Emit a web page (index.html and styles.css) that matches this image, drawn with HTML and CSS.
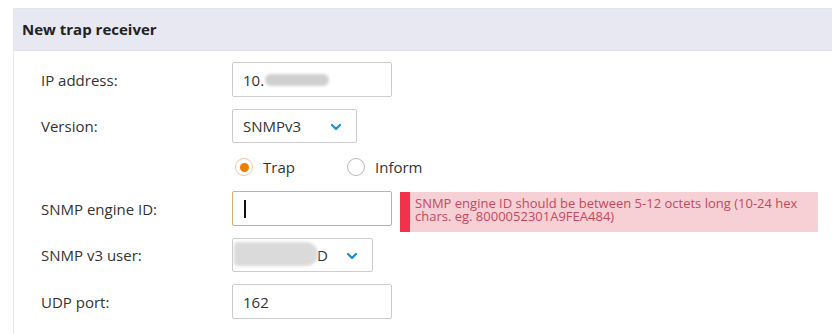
FILE: index.html
```html
<!DOCTYPE html>
<html>
<head>
<meta charset="utf-8">
<link rel="stylesheet" href="styles.css">
</head>
<body>
<div class="panel">
  <div class="header">New trap receiver</div>
  <div class="body">
    <div class="row">
      <div class="label">IP address:</div>
      <div class="field input wide"><span class="val">10.</span><span class="blur b-ip"></span></div>
    </div>
    <div class="row sel">
      <div class="label">Version:</div>
      <div class="field select sel-version"><span class="val">SNMPv3</span>
        <svg class="chev" width="12" height="8" viewBox="0 0 12 8"><path d="M2 2 L6 6 L10 2" fill="none" stroke="#1a8fd6" stroke-width="2.2" stroke-linecap="round" stroke-linejoin="round"/></svg>
      </div>
    </div>
    <div class="row radios">
      <div class="label"></div>
      <div class="radio-group">
        <label class="radio"><span class="dot on"></span>Trap</label>
        <label class="radio"><span class="dot"></span>Inform</label>
      </div>
    </div>
    <div class="row">
      <div class="label">SNMP engine ID:</div>
      <div class="field input wide focus"><span class="caret"></span></div>
      <div class="error"><div class="bar"></div><div class="msg">SNMP engine ID should be between 5-12 octets long (10-24 hex chars. eg. 8000052301A9FEA484)</div></div>
    </div>
    <div class="row sel">
      <div class="label">SNMP v3 user:</div>
      <div class="field select sel-user"><span class="blur b-user"></span><span class="val d">D</span>
        <svg class="chev" width="12" height="8" viewBox="0 0 12 8"><path d="M2 2 L6 6 L10 2" fill="none" stroke="#1a8fd6" stroke-width="2.2" stroke-linecap="round" stroke-linejoin="round"/></svg>
      </div>
    </div>
    <div class="row">
      <div class="label">UDP port:</div>
      <div class="field input wide"><span class="val">162</span></div>
    </div>
  </div>
</div>
</body>
</html>
```
FILE: styles.css
```css
html, body { margin: 0; padding: 0; background: #fff; }
body {
  font-family: "Open Sans", "Noto Sans", "Liberation Sans", sans-serif;
  color: #333;
  font-size: 15px;
  padding: 8px 0 0 13px;
  width: 819px;
  height: 326px;
  overflow: hidden;
}
.panel { display: flex; flex-direction: column; }
.header {
  background: #e7e8f1;
  height: 43px;
  line-height: 41px;
  padding-left: 9px;
  font-weight: 700;
  font-size: 15px;
  color: #222;
  border-top: 1px solid #e2e5ea;
  box-sizing: border-box;
  border-bottom: 1px solid #e0e0e6;
}
.body {
  border-left: 1px solid #e6e6e6;
  padding: 11px 0 20px 27px;
  display: flex;
  flex-direction: column;
  gap: 12px;
}
.row { display: flex; align-items: center; height: 35px; }
.row.sel { height: 34px; }
.row.radios { height: 24px; }
.label { width: 191px; flex: none; }
.field {
  box-sizing: border-box;
  height: 35px;
  border: 1px solid #ccc;
  border-radius: 2px;
  display: flex;
  align-items: center;
  padding-left: 10px;
  position: relative;
  background: #fff;
}
.select { height: 34px; }
.wide { width: 160px; }
.sel-version { width: 125px; }
.sel-user { width: 141px; }
.chev { position: absolute; right: 14px; top: 13px; }
.focus { border-color: #d4ae72; }
.caret { width: 2px; height: 18px; background: #111; margin-left: 1px; }
.blur { display: inline-block; background: #d2d2d2; filter: blur(1.5px); border-radius: 7px; }
.b-ip { width: 64px; height: 12px; margin-left: 1px; background: #cfcfcf; }
.b-user { position: absolute; left: 1px; top: 3px; width: 84px; height: 24px; background: #dadada; border-radius: 4px 12px 12px 4px; }
.val.d { margin-left: 74px; }
.radio-group { display: flex; }
.radio { display: flex; align-items: center; width: 112px; }
.dot {
  box-sizing: border-box;
  width: 18px; height: 18px;
  border: 1px solid #bbb;
  border-radius: 50%;
  margin: 0 10px 0 3px;
  position: relative;
}
.dot.on { border-color: #e9c8a4; }
.dot.on::after {
  content: "";
  position: absolute;
  left: 3.5px; top: 3.5px;
  width: 9px; height: 9px;
  border-radius: 50%;
  background: #f07d00;
}
.error {
  display: flex;
  margin-left: 8px;
  width: 418px;
  height: 40px;
  align-self: flex-start;
  margin-top: 1px;
  background: #f7d0d5;
}
.bar { width: 10px; flex: none; background: #f0334b; }
.msg {
  padding: 5px 4px 0 5px;
  font-size: 13px;
  line-height: 13px;
  color: #c44a5e;
}
```
